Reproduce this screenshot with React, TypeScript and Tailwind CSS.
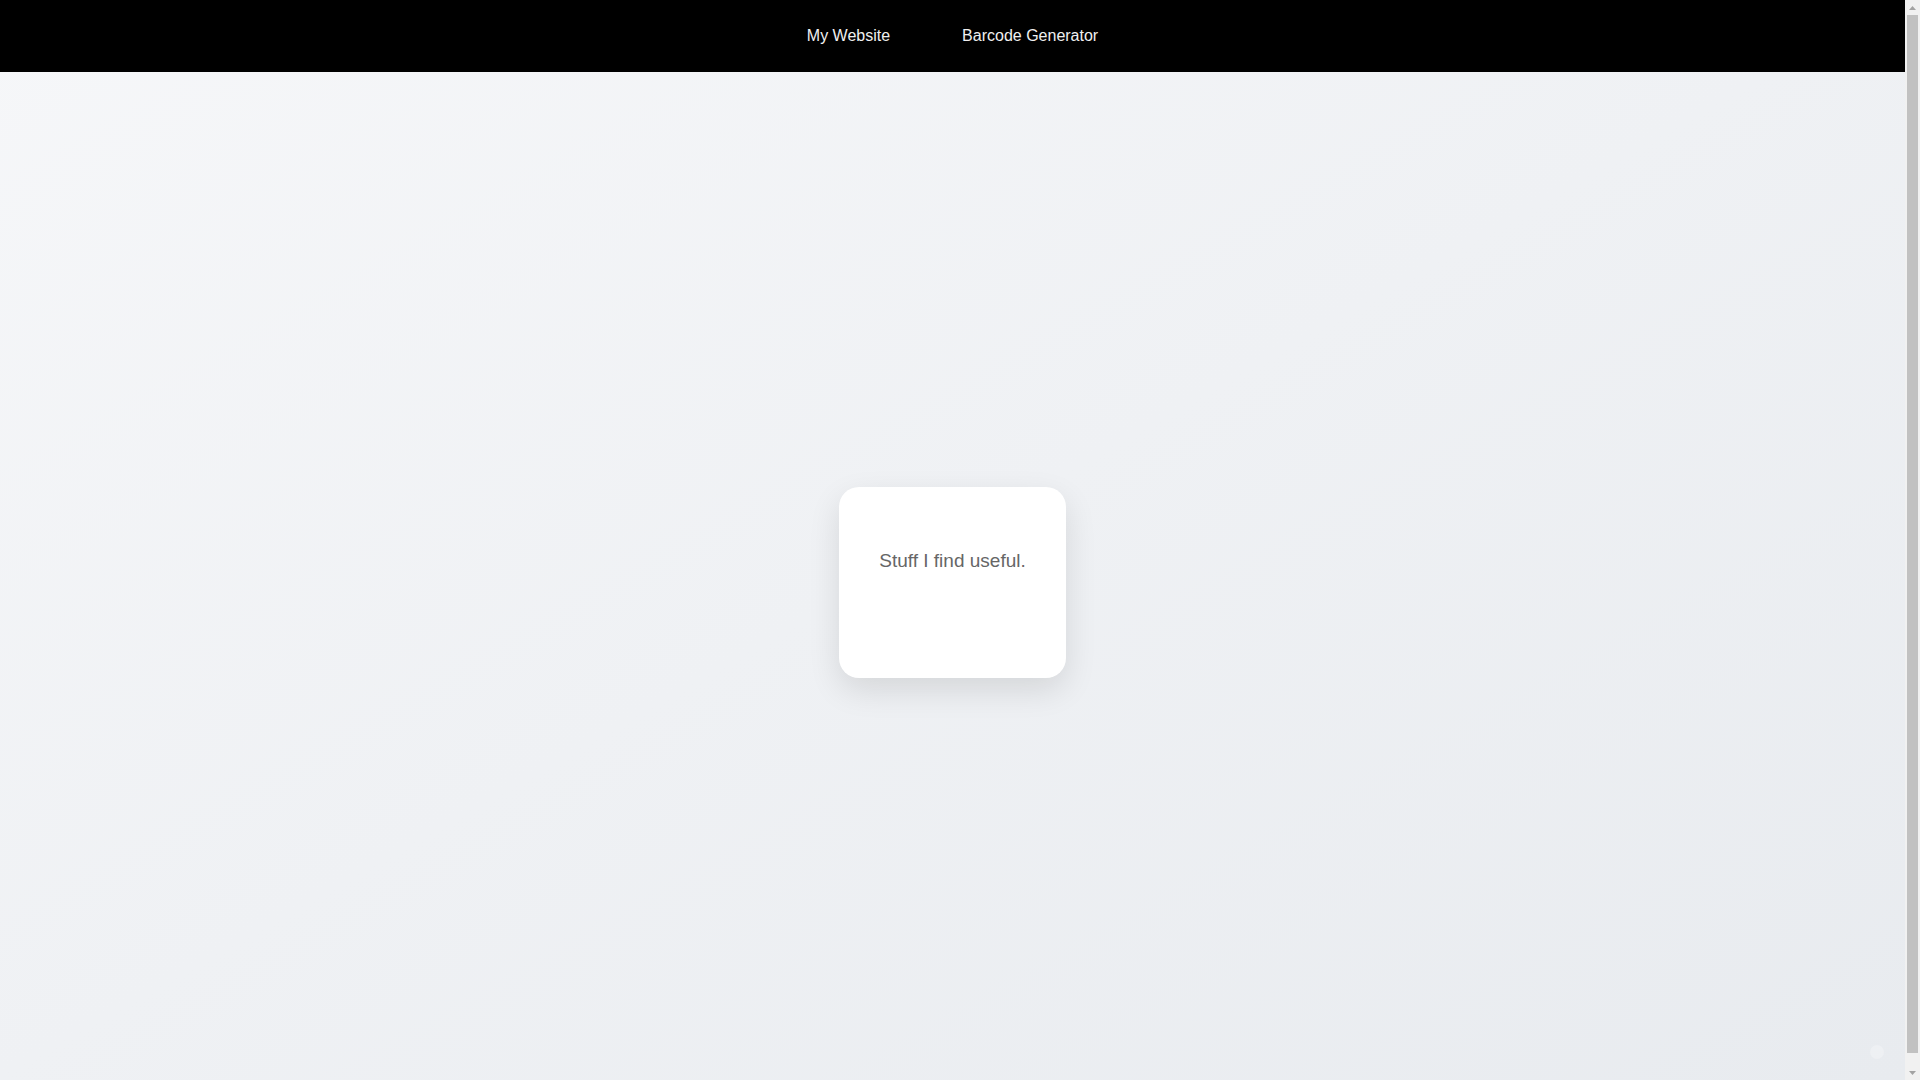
function ScrollArrow({ down = false }: { down?: boolean }) {
  return (
    <div className="flex h-[15px] items-center justify-center">
      <svg width="7" height="4" viewBox="0 0 7 4" className={down ? "rotate-180" : ""}>
        <polygon points="3.5,0 7,4 0,4" fill="#a3a3a3" />
      </svg>
    </div>
  );
}

export default function App() {
  return (
    <div className="flex h-screen overflow-hidden font-['Liberation_Sans',Arial,sans-serif]">
      <div className="min-w-0 flex-1 bg-linear-to-br from-[#f6f7f9] to-[#e8ebef]">
        <nav className="flex h-[72px] items-center justify-center gap-[72px] bg-black text-base text-[#f0f0f0]">
          <a href="#">My Website</a>
          <a href="#">Barcode Generator</a>
        </nav>

        <main className="flex min-h-[1020px] items-center justify-center">
          <div className="h-[191px] w-[227px] rounded-[20px] bg-white px-6 pt-[60px] text-center shadow-[0_12px_32px_rgba(0,0,0,0.11)]">
            <p className="text-[19px] leading-[1.5] text-[#666]">Stuff I find useful.</p>
          </div>
        </main>
      </div>

      {/* scrollbar */}
      <div className="flex w-[15px] flex-col bg-[#f1f1f1]">
        <ScrollArrow />
        <div className="flex flex-1 flex-col px-[2px] pb-[12px]">
          <div className="flex-1 bg-[#c1c1c1]" />
        </div>
        <ScrollArrow down />
      </div>

      <div className="fixed right-[36px] bottom-[21px] h-[14px] w-[14px] rounded-full bg-white/25" />
    </div>
  );
}
